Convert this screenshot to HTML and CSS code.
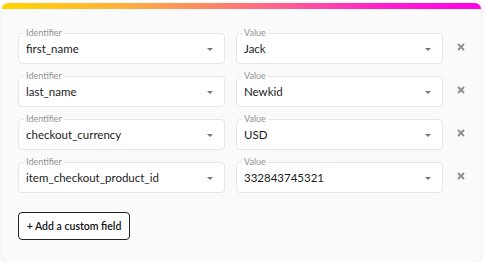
FILE: index.html
```html
<!DOCTYPE html>
<html lang="en">
<head>
    <meta charset="UTF-8">
    <meta name="viewport" content="width=device-width, initial-scale=1.0">
    <title>Custom Fields</title>
    <link rel="stylesheet" href="styles.css">
</head>
<body>

<section class="card">
    <div class="card-bar"></div>

    <div class="fields">
        <div class="field-row">
            <div class="field">
                <span class="field-label">Identifier</span>
                <span class="field-text">first_name</span>
                <span class="caret"></span>
            </div>
            <div class="field">
                <span class="field-label">Value</span>
                <span class="field-text">Jack</span>
                <span class="caret"></span>
            </div>
            <button type="button" class="remove" aria-label="Remove">
                <svg width="8" height="8" viewBox="0 0 8 8"><path d="M1 1L7 7M7 1L1 7"/></svg>
            </button>
        </div>

        <div class="field-row">
            <div class="field">
                <span class="field-label">Identifier</span>
                <span class="field-text">last_name</span>
                <span class="caret"></span>
            </div>
            <div class="field">
                <span class="field-label">Value</span>
                <span class="field-text">Newkid</span>
                <span class="caret"></span>
            </div>
            <button type="button" class="remove" aria-label="Remove">
                <svg width="8" height="8" viewBox="0 0 8 8"><path d="M1 1L7 7M7 1L1 7"/></svg>
            </button>
        </div>

        <div class="field-row">
            <div class="field">
                <span class="field-label">Identifier</span>
                <span class="field-text">checkout_currency</span>
                <span class="caret"></span>
            </div>
            <div class="field">
                <span class="field-label">Value</span>
                <span class="field-text">USD</span>
                <span class="caret"></span>
            </div>
            <button type="button" class="remove" aria-label="Remove">
                <svg width="8" height="8" viewBox="0 0 8 8"><path d="M1 1L7 7M7 1L1 7"/></svg>
            </button>
        </div>

        <div class="field-row">
            <div class="field">
                <span class="field-label">Identifier</span>
                <span class="field-text">item_checkout_product_id</span>
                <span class="caret"></span>
            </div>
            <div class="field">
                <span class="field-label">Value</span>
                <span class="field-text">332843745321</span>
                <span class="caret"></span>
            </div>
            <button type="button" class="remove" aria-label="Remove">
                <svg width="8" height="8" viewBox="0 0 8 8"><path d="M1 1L7 7M7 1L1 7"/></svg>
            </button>
        </div>
    </div>

    <button type="button" class="btn-add">+ Add a custom field</button>
</section>

</body>
</html>
```

FILE: styles.css
```css
/* Styles */
body {
    font-family: Lato, "Open Sans", sans-serif;
    margin: 0;
    padding: 3px 5px 0 2px;
    background-color: #fff;
    color: #1a1a1a;
}

.card {
    width: 479px;
    height: 259px;
    box-sizing: border-box;
    background-color: #fafafa;
    border-radius: 6px;
    box-shadow: 0 1px 4px rgba(0, 0, 0, 0.12);
    overflow: hidden;
}

.card-bar {
    height: 6px;
    background: linear-gradient(90deg, #ffd500 0%, #ffb03a 25%, #ff8a62 42%, #ff5b95 60%, #ff1ed0 80%, #ff00e8 100%);
}

.fields {
    display: flex;
    flex-direction: column;
    gap: 12px;
    padding: 24px 0 0 16px;
}

.field-row {
    display: grid;
    grid-template-columns: 207px 207px 34px;
    column-gap: 11px;
    align-items: center;
}

.field {
    position: relative;
    height: 31px;
    box-sizing: border-box;
    display: flex;
    align-items: center;
    padding: 0 7px;
    background-color: #fff;
    border: 1px solid #e7e7e7;
    border-radius: 4px;
}

.field-label {
    position: absolute;
    top: -6px;
    left: 5px;
    padding: 0 2px;
    font-size: 9px;
    line-height: 10px;
    color: #939393;
    background: linear-gradient(#fafafa 50%, #fff 50%);
}

.field-text {
    flex: 1;
    font-size: 11.5px;
    color: #1c1c1c;
}

.caret {
    width: 0;
    height: 0;
    margin-right: 4px;
    margin-top: 2px;
    border-left: 3px solid transparent;
    border-right: 3px solid transparent;
    border-top: 3px solid #777;
}

.remove {
    justify-self: start;
    display: flex;
    margin: -3px 0 0 3px;
    padding: 0;
    border: none;
    background: none;
    cursor: pointer;
}

.remove svg {
    stroke: #8c8c8c;
    stroke-width: 1.8;
    fill: none;
}

.btn-add {
    display: block;
    margin: 19px 0 0 16px;
    width: 112px;
    height: 28px;
    padding: 0;
    font-family: inherit;
    font-size: 10.5px;
    font-weight: 600;
    color: #111;
    background-color: #fff;
    border: 1px solid #222;
    border-radius: 4px;
    cursor: pointer;
}
```
